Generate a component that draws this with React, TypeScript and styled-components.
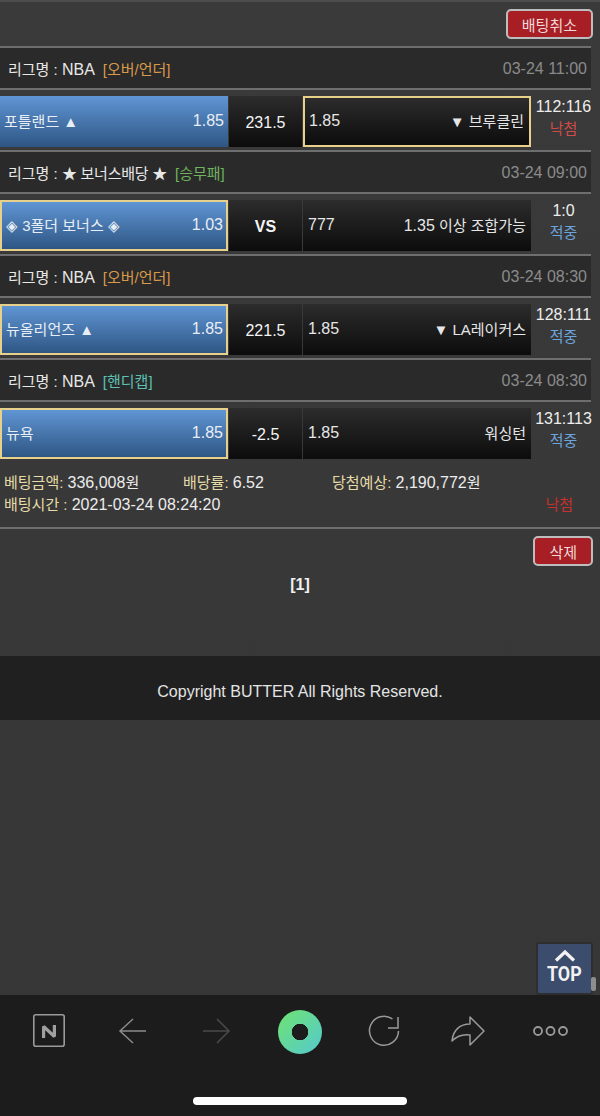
import React from 'react';
import styled, { createGlobalStyle } from 'styled-components';

const FONT = `"Liberation Sans", "Noto Sans CJK KR", sans-serif`;

type Bet = {
    league: string;
    latinLeague: boolean;
    tag: string;
    tagColor: string;
    time: string;
    home: string;
    homeOdds: string;
    center: string;
    centerBold?: boolean;
    awayOdds: string;
    awayNote?: string;
    away: string;
    picked: 'home' | 'away';
    score: string;
    result: string;
    win: boolean;
};

const bets: Bet[] = [
    { league: 'NBA', latinLeague: true, tag: '[오버/언더]', tagColor: '#d9994b', time: '03-24 11:00', home: '포틀랜드 ▲', homeOdds: '1.85', center: '231.5', awayOdds: '1.85', away: '▼ 브루클린', picked: 'away', score: '112:116', result: '낙첨', win: false },
    { league: '★ 보너스배당 ★', latinLeague: false, tag: '[승무패]', tagColor: '#6fb35e', time: '03-24 09:00', home: '◈ 3폴더 보너스 ◈', homeOdds: '1.03', center: 'VS', centerBold: true, awayOdds: '777', awayNote: '1.35', away: ' 이상 조합가능', picked: 'home', score: '1:0', result: '적중', win: true },
    { league: 'NBA', latinLeague: true, tag: '[오버/언더]', tagColor: '#d9994b', time: '03-24 08:30', home: '뉴올리언즈 ▲', homeOdds: '1.85', center: '221.5', awayOdds: '1.85', away: '▼ LA레이커스', picked: 'home', score: '128:111', result: '적중', win: true },
    { league: 'NBA', latinLeague: true, tag: '[핸디캡]', tagColor: '#5cc0b4', time: '03-24 08:30', home: '뉴욕', homeOdds: '1.85', center: '-2.5', awayOdds: '1.85', away: '워싱턴', picked: 'home', score: '131:113', result: '적중', win: true },
];

const App = () => {
    return (
        <Page>
            <GlobalStyle />
            <Content>
                <TopBar>
                    <RedButton>배팅취소</RedButton>
                </TopBar>
                {bets.map((bet, i) => (
                    <BetBlock key={i}>
                        <LeagueRow>
                            <LeagueName>
                                리그명 : <LeagueText latin={bet.latinLeague}>{bet.league}</LeagueText>
                                <LeagueTag color={bet.tagColor}>{bet.tag}</LeagueTag>
                            </LeagueName>
                            <GameTime>{bet.time}</GameTime>
                        </LeagueRow>
                        <OddsRow>
                            <HomeCell picked={bet.picked === 'home'}>
                                <span>{bet.home}</span>
                                <Num>{bet.homeOdds}</Num>
                            </HomeCell>
                            <CenterCell bold={bet.centerBold}>{bet.center}</CenterCell>
                            <AwayCell picked={bet.picked === 'away'}>
                                <Num>{bet.awayOdds}</Num>
                                <span><Num>{bet.awayNote}</Num>{bet.away}</span>
                            </AwayCell>
                            <ResultCell>
                                <Num>{bet.score}</Num>
                                <ResultLabel win={bet.win}>{bet.result}</ResultLabel>
                            </ResultCell>
                        </OddsRow>
                    </BetBlock>
                ))}
                <Summary>
                    <SummaryLine>
                        <SummaryItem width={179}><Label>베팅금액:</Label> <Num>336,008</Num>원</SummaryItem>
                        <SummaryItem width={149}><Label>배당률:</Label> <Num>6.52</Num></SummaryItem>
                        <SummaryItem><Label>당첨예상:</Label> <Num>2,190,772</Num>원</SummaryItem>
                    </SummaryLine>
                    <SummaryLine>
                        <SummaryItem><Label>배팅시간 :</Label> <Num>2021-03-24 08:24:20</Num></SummaryItem>
                        <LostLabel>낙첨</LostLabel>
                    </SummaryLine>
                </Summary>
                <DeleteRow>
                    <RedButton>삭제</RedButton>
                </DeleteRow>
                <Pager>[1]</Pager>
                <Footer>Copyright BUTTER All Rights Reserved.</Footer>
            </Content>
            <TopButton>
                <svg width="22" height="13" viewBox="0 0 22 13">
                    <path d="M2 11.5 L11 3 L20 11.5" fill="none" stroke="#f2f2f2" strokeWidth="3.2" />
                </svg>
                <TopText>TOP</TopText>
            </TopButton>
            <ScrollThumb />
            <BottomNav>
                <NavIcons>
                    <svg width="36" height="36" viewBox="0 0 36 36">
                        <rect x="3.8" y="1.8" width="30.4" height="31.4" rx="2" fill="none" stroke="#9a9a9a" strokeWidth="1.6" />
                        <path d="M13.6 25 V13.5 L24.4 23.5 V12" fill="none" stroke="#a0a0a0" strokeWidth="3.2" strokeLinejoin="bevel" />
                    </svg>
                    <svg width="36" height="36" viewBox="0 0 36 36">
                        <path d="M32 18 H6 M19 6 L6 18 L19 30" fill="none" stroke="#8a8a8a" strokeWidth="1.5" />
                    </svg>
                    <svg width="36" height="36" viewBox="0 0 36 36">
                        <path d="M5 18 H31 M19 6 L31 18 L19 30" fill="none" stroke="#4a4a4a" strokeWidth="1.5" />
                    </svg>
                    <HomeOrb />
                    <svg width="36" height="36" viewBox="0 0 36 36">
                        <path d="M26.5 6 A14.5 14.5 0 1 0 32.5 18 M32 4 V15 H22" fill="none" stroke="#9a9a9a" strokeWidth="1.5" />
                    </svg>
                    <svg width="36" height="36" viewBox="0 0 36 36">
                        <path d="M20 4 L34 18 L20 32 V22 C13 21 7 23 2 28 C3 17 10 11 20 11 Z" fill="none" stroke="#9a9a9a" strokeWidth="1.5" strokeLinejoin="round" />
                    </svg>
                    <svg width="38" height="36" viewBox="0 0 38 36">
                        <circle cx="5" cy="18" r="4" fill="none" stroke="#9a9a9a" strokeWidth="1.8" />
                        <circle cx="17.5" cy="18" r="4" fill="none" stroke="#9a9a9a" strokeWidth="1.8" />
                        <circle cx="30" cy="18" r="4" fill="none" stroke="#9a9a9a" strokeWidth="1.8" />
                    </svg>
                </NavIcons>
                <HomeBar />
            </BottomNav>
        </Page>
    );
};

const GlobalStyle = createGlobalStyle`
    * { box-sizing: border-box; }
    html, body { margin: 0; padding: 0; background: #383838; }
    body { font-family: ${FONT}; }
`

const Page = styled.div`
    position: relative;
    display: flex;
    flex-direction: column;
    width: 600px;
    height: 1116px;
    overflow: hidden;
    background: linear-gradient(#3a3a3a, #363636);
    color: #f0f0f0;
    font-size: 15px;
`

const Content = styled.div`
    flex: 1;
    border-top: 2px solid #4d4d4d;
`

const Num = styled.span`
    font-size: 16px;
`

const TopBar = styled.div`
    display: flex;
    justify-content: flex-end;
    height: 44px;
    padding: 7px 7px 0 0;
`

const RedButton = styled.div`
    height: 30px;
    padding: 0 14px;
    display: flex;
    align-items: center;
    border: 2px solid #bdbdbd;
    border-radius: 5px;
    background: #a71f25;
    color: #f0d8d8;
    font-size: 15px;
`

const BetBlock = styled.div`
    height: 104px;
`

const LeagueRow = styled.div`
    display: flex;
    align-items: center;
    justify-content: space-between;
    width: 591px;
    height: 44px;
    padding: 0 4px 0 8px;
    background: #2a2a2a;
    border-top: 2px solid #6e6e6e;
    border-bottom: 2px solid #6e6e6e;
`

const LeagueName = styled.div`
    color: #e8e8e8;
`

const LeagueText = styled.span<{latin: boolean}>`
    font-size: ${({latin}) => latin ? '16px' : '15px'};
    letter-spacing: ${({latin}) => latin ? '0' : '-0.25px'};
`

const LeagueTag = styled.span<{color: string}>`
    margin-left: 8px;
    color: ${({color}) => color};
`

const GameTime = styled.div`
    padding-top: 2px;
    font-size: 16px;
    color: #8b8b8b;
`

const OddsRow = styled.div`
    display: grid;
    grid-template-columns: 228px 73px 1fr 68px;
    column-gap: 1px;
    height: 51px;
    margin-top: 6px;
`

const HomeCell = styled.div<{picked: boolean}>`
    display: flex;
    align-items: center;
    justify-content: space-between;
    padding: 0 ${({picked}) => picked ? '3px' : '4px'} 2px 4px;
    background: linear-gradient(#6095d4, #2e5684);
    border: ${({picked}) => picked ? '2px solid #e6d08a' : 'none'};
    color: #e8eef5;
`

const CenterCell = styled.div<{bold?: boolean}>`
    display: flex;
    align-items: center;
    justify-content: center;
    padding-top: 3px;
    background: linear-gradient(#2c2c2c, #0c0c0c);
    color: #f4f4f4;
    font-size: 16px;
    font-weight: ${({bold}) => bold ? 700 : 400};
`

const AwayCell = styled.div<{picked: boolean}>`
    display: flex;
    align-items: center;
    justify-content: space-between;
    padding: 0 5px 2px;
    padding-left: ${({picked}) => picked ? '4px' : '5px'};
    background: linear-gradient(#2c2c2c, #0c0c0c);
    border: ${({picked}) => picked ? '2px solid #e6d08a' : 'none'};
    color: #e6e6e6;
`

const ResultCell = styled.div`
    display: flex;
    flex-direction: column;
    align-items: center;
    gap: 5px;
    padding: 2px 5px 0 0;
    line-height: 17px;
    color: #eeeeee;
`

const ResultLabel = styled.span<{win: boolean}>`
    color: ${({win}) => win ? '#6ea4dc' : '#d24a48'};
`

const Summary = styled.div`
    height: 67px;
    padding: 8px 4px 0;
    border-bottom: 2px solid #6e6e6e;
`

const SummaryLine = styled.div`
    display: flex;
    height: 22px;
    align-items: center;
    color: #ececec;
`

const SummaryItem = styled.div<{width?: number}>`
    ${({width}) => width ? `width: ${width}px;` : ''}
`

const Label = styled.span`
    color: #e6dca8;
`

const LostLabel = styled.span`
    margin-left: auto;
    margin-right: 23px;
    color: #c8302f;
`

const DeleteRow = styled.div`
    display: flex;
    justify-content: flex-end;
    height: 46px;
    padding: 7px 7px 0 0;
`

const Pager = styled.div`
    height: 81px;
    padding-top: 1px;
    text-align: center;
    font-weight: 700;
    font-size: 16px;
`

const Footer = styled.div`
    display: flex;
    align-items: center;
    justify-content: center;
    height: 64px;
    padding-top: 7px;
    background: #202020;
    color: #e4e4e4;
    font-size: 16px;
`

const TopButton = styled.div`
    position: absolute;
    left: 536px;
    top: 942px;
    display: flex;
    flex-direction: column;
    align-items: center;
    width: 57px;
    height: 53px;
    padding-top: 5px;
    background: #3c4c6c;
    border: 2px solid #2e2e30;
    border-radius: 3px;
`

const TopText = styled.span`
    margin-top: 2px;
    color: #f2f2f2;
    font: 700 21px/20px Roboto, sans-serif;
    transform: scaleX(0.85);
`

const ScrollThumb = styled.div`
    position: absolute;
    left: 591px;
    top: 977px;
    width: 5px;
    height: 14px;
    border-radius: 2px;
    background: #8e8e8e;
`

const BottomNav = styled.div`
    height: 121px;
    background: #1c1c1c;
`

const NavIcons = styled.div`
    display: grid;
    grid-template-columns: repeat(7, 84px);
    align-items: center;
    justify-items: center;
    height: 72px;
    padding-left: 6px;
`

const HomeOrb = styled.div`
    width: 44px;
    height: 44px;
    margin-top: 1px;
    border-radius: 50%;
    background:
        radial-gradient(circle, #1c1c1c 0 8px, transparent 8.5px),
        linear-gradient(135deg, #6fe36f, #55c9d0);
`

const HomeBar = styled.div`
    width: 214px;
    height: 8px;
    margin: 30px auto 0;
    border-radius: 4px;
    background: #ffffff;
`

export default App;
